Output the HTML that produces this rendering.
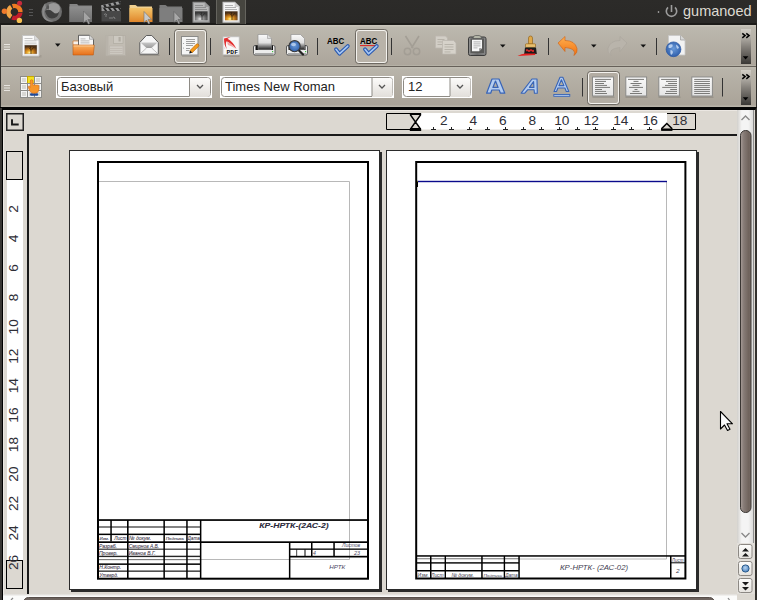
<!DOCTYPE html>
<html><head><meta charset="utf-8">
<style>
*{margin:0;padding:0;box-sizing:border-box}
html,body{width:757px;height:600px;overflow:hidden;background:#dcd8d1;font-family:"Liberation Sans",sans-serif}
.a{position:absolute}
#panel{left:0;top:0;width:757px;height:25px;background:linear-gradient(#2c2b29,#2a2927 23px,#1c1b19 23px)}
#tb1{left:0;top:25px;width:757px;height:42px;background:linear-gradient(#c8c4ba,#c8c4ba 1px,#bcb8ae 2px,#aca59b 40px,#b5b1a6 40px,#b5b1a6 41px,#666059 41px,#666059 42px);border-left:1px solid #2d2c29;border-right:1px solid #2d2c29}
#tb2{left:0;top:67px;width:757px;height:40px;background:linear-gradient(#bfbbb1,#b8b4aa 3px,#aaa398 38px,#b8b3a8 39px);border-left:1px solid #2d2c29;border-right:1px solid #2d2c29}
#work{left:0;top:107px;width:757px;height:493px;background:#dcd8d1;border-left:3px solid #000;border-right:2px solid #33312e;border-top:3px solid #050505;box-shadow:inset 1px 1px 0 #ebe7e2}
.sep{position:absolute;width:1px;height:17px;background:#2c2c2c}
.tog{position:absolute;border:1px solid #f2f0ec;border-radius:3px;background:#bcb7ad;box-shadow:inset 0 0 0 1px #a8a399}
.combo{position:absolute;background:#fff;border:1px solid #f4f2ee}
.combo .in{position:absolute;left:1px;top:1px;right:1px;bottom:1px;border:1px solid #8d8a84;border-radius:3px;background:#fff}
.combo .btn{position:absolute;top:0;right:0;bottom:0;border-left:1px solid #8d8a84;background:linear-gradient(#fbfaf9,#e4e1dc);border-radius:0 3px 3px 0}
.combo .t{position:absolute;left:4px;top:3px;font-size:13px;color:#2b2b2b}
.page{position:absolute;background:#fff;border-left:1px solid #3a3a3a;border-top:1px solid #3a3a3a;box-shadow:3px 3px 0 #2c2c2c}
.ln{position:absolute;background:#000}
.gl{position:absolute;background:#b4b4b4}
.tt{position:absolute;font-size:6px;font-style:italic;color:#3d3a6e;white-space:nowrap;line-height:1}
.rl{position:absolute;font-size:12px;color:#404040;line-height:1}
</style></head><body>
<div id="panel" class="a"></div>
<div id="tb1" class="a"></div>
<div id="tb2" class="a"></div>
<div id="work" class="a"></div>
<div class="a" style="left:0;top:108px;width:2px;height:492px;background:#393734"></div>
<!-- ===== pages ===== -->
<svg class="a" style="left:0;top:107px" width="757" height="493" viewBox="0 107 757 493" shape-rendering="auto">
  <!-- page 1 -->
  <rect x="71" y="152" width="311" height="440" fill="#2a2a2a"/>
  <rect x="69.5" y="150.5" width="310" height="439" fill="#fff" stroke="#2a2a2a" stroke-width="1"/>
  <!-- page 2 -->
  <rect x="388" y="152" width="311" height="440" fill="#2a2a2a"/>
  <rect x="386.5" y="150.5" width="310" height="439" fill="#fff" stroke="#2a2a2a" stroke-width="1"/>

  <!-- page 1 content gray box -->
  <path d="M99 181.5 H349.5 V559.5 H99" fill="none" stroke="#b8b8b8" stroke-width="1"/>
  <!-- page 1 frame -->
  <rect x="98" y="162" width="270" height="416.7" fill="none" stroke="#000" stroke-width="2"/>
  <!-- title block p1 -->
  <g fill="#000">
    <rect x="97" y="519.2" width="271.5" height="1.7"/>
    <rect x="97" y="541.3" width="271.5" height="1.7"/>
    <rect x="97" y="533.6" width="104" height="1.5"/>
    <rect x="97" y="526.4" width="104" height="1.2" opacity=".8"/>
    <rect x="97" y="548.6" width="104" height="1.2" opacity=".8"/>
    <rect x="97" y="555.7" width="104" height="1.4" opacity=".85"/>
    <rect x="97" y="559.3" width="104" height=".9" opacity=".45"/>
    <rect x="97" y="563.4" width="104" height="1.5"/>
    <rect x="97" y="570.5" width="104" height="1.3" opacity=".85"/>
    <!-- verticals -->
    <rect x="110.3" y="520" width="1.5" height="21.5"/>
    <rect x="127" y="520" width="1.6" height="59"/>
    <rect x="163.4" y="520" width="1.5" height="59"/>
    <rect x="186.2" y="520" width="1.5" height="59"/>
    <rect x="199.9" y="520" width="1.5" height="59"/>
    <!-- right part -->
    <rect x="288.9" y="542" width="1.5" height="37"/>
    <rect x="289" y="548.5" width="79" height="1.3"/>
    <rect x="289" y="555.8" width="79" height="1.7"/>
    <rect x="311" y="542" width="1.5" height="15"/>
    <rect x="333.3" y="542" width="1.5" height="15"/>
    <rect x="296" y="549.5" width="1.2" height="6.5" opacity=".6"/>
    <rect x="304.5" y="549.5" width="1" height="6.5"/>
  </g>
  <!-- page 2 content -->
  <path d="M666.5 182 V559 H417" fill="none" stroke="#b8b8b8" stroke-width="1"/>
  <rect x="417" y="180.8" width="250" height="1.4" fill="#0a0a8c"/>
  <rect x="417" y="181" width="1" height="6" fill="#000"/>
  <rect x="416.5" y="181" width="1" height="1" fill="#e8e000"/>
  <!-- page 2 frame -->
  <rect x="416.2" y="162" width="269.2" height="416.5" fill="none" stroke="#000" stroke-width="2"/>
  <g fill="#000">
    <rect x="416" y="555.2" width="270" height="1.5"/>
    <rect x="416" y="558" width="103" height=".9" opacity=".35"/>
    <rect x="416" y="562.2" width="103" height="1.4"/>
    <rect x="416" y="570" width="103" height="1.5"/>
    <rect x="670.3" y="562.3" width="15" height="1"/>
    <rect x="430" y="556" width="1.5" height="23"/>
    <rect x="444.6" y="556" width="1.4" height="23"/>
    <rect x="481.2" y="556" width="1.5" height="23"/>
    <rect x="503.7" y="556" width="1.4" height="23"/>
    <rect x="518.3" y="556" width="1.5" height="23"/>
    <rect x="670" y="556" width="1.5" height="23"/>
  </g>
</svg>
<!-- title block texts -->
<svg class="a" style="left:0;top:107px" width="757" height="493" viewBox="0 107 757 493">
<g font-family="Liberation Sans" font-style="italic" fill="#3c3448" stroke="#3c3448" stroke-width="0.08">
<text x="99.6" y="540" font-size="4" textLength="9.4" lengthAdjust="spacingAndGlyphs">Изм.</text>
<text x="114.2" y="540.2" font-size="6" textLength="12.3" lengthAdjust="spacingAndGlyphs">Лист</text>
<text x="129.1" y="540.2" font-size="6" textLength="22.1" lengthAdjust="spacingAndGlyphs">№ докум.</text>
<text x="165.8" y="540.2" font-size="4" textLength="18.1" lengthAdjust="spacingAndGlyphs">Подпись</text>
<text x="187.6" y="540.2" font-size="6" textLength="12.3" lengthAdjust="spacingAndGlyphs">Дата</text>
<text x="98.9" y="548.2" font-size="6" textLength="18.1" lengthAdjust="spacingAndGlyphs">Разраб.</text>
<text x="128.7" y="548.2" font-size="6" textLength="30.5" lengthAdjust="spacingAndGlyphs">Смирнов А.В.</text>
<text x="98.9" y="555.4" font-size="6" textLength="18.9" lengthAdjust="spacingAndGlyphs">Провер.</text>
<text x="128.7" y="555.4" font-size="6" textLength="26.9" lengthAdjust="spacingAndGlyphs">Иванов В.Г.</text>
<text x="99.3" y="569.2" font-size="5.5" textLength="21.8" lengthAdjust="spacingAndGlyphs">Н.Контр.</text>
<text x="99.5" y="576.8" font-size="5.5" textLength="18.7" lengthAdjust="spacingAndGlyphs">Утверд.</text>
<text x="259.2" y="528.2" font-size="7.3" textLength="69.4" lengthAdjust="spacingAndGlyphs" font-weight="bold" fill="#2a2a3a">КР-НРТК-(2АС-2)</text>
<text stroke="none" fill="#4a4864" x="342" y="546.9" font-size="4.8" textLength="18.1" lengthAdjust="spacingAndGlyphs">Листов</text>
<text stroke="none" fill="#4a4864" x="312.9" y="554.5" font-size="4.6" textLength="2.9" lengthAdjust="spacingAndGlyphs">4</text>
<text stroke="none" fill="#4a4864" x="354" y="554.5" font-size="4.6" textLength="6.1" lengthAdjust="spacingAndGlyphs">23</text>
<text stroke="none" fill="#4a4864" x="329.3" y="568.7" font-size="5.2" textLength="15.9" lengthAdjust="spacingAndGlyphs">НРТК</text>
<text stroke="none" fill="#3e3c50" x="417.3" y="576.7" font-size="6" textLength="11.6" lengthAdjust="spacingAndGlyphs">Изм.</text>
<text stroke="none" fill="#3e3c50" x="431" y="576.7" font-size="6" textLength="12.7" lengthAdjust="spacingAndGlyphs">Лист</text>
<text stroke="none" fill="#3e3c50" x="451.4" y="576.7" font-size="6" textLength="22.6" lengthAdjust="spacingAndGlyphs">№ докум.</text>
<text stroke="none" fill="#3e3c50" x="483.4" y="576.7" font-size="4" textLength="18.9" lengthAdjust="spacingAndGlyphs">Подпись</text>
<text stroke="none" fill="#3e3c50" x="505.2" y="576.7" font-size="6" textLength="12.4" lengthAdjust="spacingAndGlyphs">Дата</text>
<text stroke="none" fill="#3e3c50" x="560" y="569.6" font-size="6.8" textLength="68.1" lengthAdjust="spacingAndGlyphs">КР-НРТК- (2АС-02)</text>
<text stroke="none" fill="#3e3c50" x="671.8" y="561.9" font-size="4.8" textLength="11.6" lengthAdjust="spacingAndGlyphs">Лист</text>
<text stroke="none" fill="#3e3c50" x="676" y="573" font-size="5.5" textLength="3.5" lengthAdjust="spacingAndGlyphs">2</text>
</g></svg>
<!-- ===== top panel ===== -->
<svg class="a" style="left:0;top:0" width="757" height="25" viewBox="0 0 757 25">
  <defs>
    <linearGradient id="ffg" x1="0" y1="0" x2="0" y2="1"><stop offset="0" stop-color="#7a7a7a"/><stop offset="1" stop-color="#3e3e3e"/></linearGradient>
    <linearGradient id="fog" x1="0" y1="0" x2="0" y2="1"><stop offset="0" stop-color="#f3c46a"/><stop offset="1" stop-color="#e0862a"/></linearGradient>
    <linearGradient id="fgg" x1="0" y1="0" x2="0" y2="1"><stop offset="0" stop-color="#8e8e8e"/><stop offset="1" stop-color="#707070"/></linearGradient>
    <radialGradient id="sun" cx=".4" cy=".85" r=".7"><stop offset="0" stop-color="#fff0a0"/><stop offset=".25" stop-color="#f0b030"/><stop offset=".6" stop-color="#b06a18"/><stop offset="1" stop-color="#4a3018"/></radialGradient>
    <radialGradient id="sung" cx=".4" cy=".85" r=".7"><stop offset="0" stop-color="#e8e8e8"/><stop offset=".3" stop-color="#a0a0a0"/><stop offset=".7" stop-color="#606060"/><stop offset="1" stop-color="#3a3a3a"/></radialGradient>
  </defs>
  <!-- ubuntu logo -->
  <path d="M12.55 6.19 A6.0 6.0 0 0 1 20.40 12.11" fill="none" stroke="#ef7b22" stroke-width="4.4"/>
  <path d="M20.34 12.74 A6.0 6.0 0 0 1 12.15 17.46" fill="none" stroke="#c21d2c" stroke-width="4.4"/>
  <path d="M11.22 6.81 A6.0 6.0 0 0 0 11.22 16.99" fill="none" stroke="#f2a446" stroke-width="4.4"/>
  <circle cx="4.4" cy="11.3" r="2.7" fill="#ef7a2c"/>
  <circle cx="19.6" cy="3.3" r="2.5" fill="#c62a3c"/>
  <circle cx="19.4" cy="20.4" r="2.7" fill="#f6c052"/>
  <!-- handle -->
  <rect x="29" y="9" width="4" height="1" fill="#555"/><rect x="29" y="12" width="4" height="1" fill="#555"/><rect x="29" y="15" width="4" height="1" fill="#555"/>
  <!-- firefox gray -->
  <circle cx="51.7" cy="11.8" r="10.3" fill="#6c6c6c"/>
  <ellipse cx="53.5" cy="8.5" rx="6.5" ry="5.5" fill="#9a9a9a"/>
  <path d="M45 11 q4 -3 8 1 q3 3 6 0 q-1 6 -7 6.5 q-5 0 -7 -7.5z" fill="#3e3e3e"/>
  <path d="M48 4.5 q2 2 .5 5 q-1.5 -1 -3 -1z" fill="#555"/>
  <path d="M42.3 10 q.5 -4 3 -7 q0 3 1 4.5 q-3 3 -1.5 8 q2 5 9 5.5 q-7 1.5 -10 -3 q-2 -4 -1.5 -8z" fill="#8a8a8a"/>
  <!-- gray folder -->
  <path d="M69.5 4 h7.5 l1.5 1.5 h13.5 v16.5 h-22.5z" fill="#848484"/>
  <rect x="69.5" y="6.5" width="22.5" height="15.5" fill="url(#fgg)"/>
  <path d="M83.5 11 v12 l2.8 -2.8 2 4 1.6 -.8 -2 -3.8 h3.8z" fill="#a4a4a4" stroke="#5a5a5a" stroke-width=".5"/>
  <!-- clapper -->
  <rect x="101.5" y="11" width="19.5" height="10.5" fill="#474747"/>
  <rect x="101.5" y="8" width="19.5" height="3" fill="#9a9a9a"/>
  <path d="M103 8h2.2l2 3h-2.2zM108 8h2.2l2 3h-2.2zM113 8h2.2l2 3h-2.2zM118 8h2.2l.8 1.2v1.8h-1z" fill="#262626"/>
  <path d="M101 5.2 L120.5 1 L121 4 L101.5 8z" fill="#9a9a9a"/>
  <path d="M103 4.8l2.2-.5 1.5 2.6-2.2 .5zM108 3.7l2.2-.5 1.5 2.6-2.2 .5zM113 2.6l2.2-.5 1.5 2.6-2.2 .5zM118 1.5l2.2-.5 .8 1.6 -.3 1.3-1 .2z" fill="#262626"/>
  <path d="M104 14.5 q2 -1.5 3 .5 M105 16 h2 M109 18 h4 M113 17 q2 0 2 2" stroke="#9a9a9a" stroke-width=".7" fill="none"/>
  <!-- orange folder -->
  <path d="M129.5 5 h6 l2 1.5 h14.5 v15.5 h-22.5z" fill="#f0d090"/>
  <rect x="129.5" y="8" width="23" height="14" fill="url(#fog)"/>
  <path d="M144 11.5 v11 l2.5-2.5 2 4 1.5-.8 -2-3.8 h3.5z" fill="#c8c8c8" stroke="#666" stroke-width=".5"/>
  <!-- gray folder 2 -->
  <path d="M159.5 5 h6 l2 1.5 h14.5 v15.5 h-22.5z" fill="#7a7a7a"/>
  <rect x="159.5" y="8" width="23" height="14" fill="#7e7e7e"/>
  <path d="M174 11.5 v11 l2.5-2.5 2 4 1.5-.8 -2-3.8 h3.5z" fill="#a8a8a8" stroke="#555" stroke-width=".5"/>
  <!-- gray doc -->
  <path d="M192.5 1.8 h12.5 l4.8 4.8 v16.2 h-17.3z" fill="#8e8e8e"/>
  <path d="M193.7 3 h11 l3.9 3.9 v14.7 h-14.9z" fill="#b8b8b8"/>
  <path d="M204.7 3 v3.9 h3.9" fill="#999"/>
  <rect x="195" y="5" width="8" height=".9" fill="#8a8a8a"/><rect x="195" y="7" width="11" height=".9" fill="#8a8a8a"/><rect x="195" y="9" width="12" height=".9" fill="#8a8a8a"/>
  <rect x="195" y="11.3" width="12.6" height="9" fill="url(#sung)"/>
  <path d="M202 20 v-4 l-2 -2.5 M202 16.5 l2.5 -3 M202 15 l-1 -3" stroke="#222" stroke-width=".7" fill="none"/>
  <!-- active highlight -->
  <rect x="216" y="0" width="30" height="24" fill="#46453f"/>
  <rect x="216" y="0" width="1" height="24" fill="#65645e"/><rect x="245" y="0" width="1" height="24" fill="#65645e"/>
  <path d="M222.5 1.8 h12.5 l4.8 4.8 v16.2 h-17.3z" fill="#c8c8c8"/>
  <path d="M223.7 3 h11 l3.9 3.9 v14.7 h-14.9z" fill="#f4f4f4"/>
  <path d="M234.7 3 v3.9 h3.9" fill="#ccc"/>
  <rect x="225" y="5" width="8" height=".9" fill="#aaa"/><rect x="225" y="7" width="11" height=".9" fill="#aaa"/><rect x="225" y="9" width="12" height=".9" fill="#aaa"/>
  <rect x="225" y="11.3" width="12.6" height="9" fill="url(#sun)"/>
  <path d="M232 20 v-4 l-2 -2.5 M232 16.5 l2.5 -3 M232 15 l-1 -3" stroke="#2a1a0a" stroke-width=".7" fill="none"/>
  <!-- power + user -->
  <circle cx="658.5" cy="12" r=".8" fill="#ccc"/>
  <path d="M668 7.3 A5.2 5.2 0 1 0 675 7.3" fill="none" stroke="#9d9d9d" stroke-width="1.6"/>
  <rect x="670.7" y="5" width="1.6" height="7" fill="#9d9d9d"/>
</svg>
<div class="a" style="left:683px;top:2.5px;font-size:14.5px;color:#dedad2;line-height:17px">gumanoed</div>
<!-- ===== rulers ===== -->
<svg class="a" style="left:0;top:107px" width="757" height="493" viewBox="0 107 757 493">
  <!-- L tab -->
  <rect x="6.75" y="113.75" width="16.5" height="16.5" fill="#dcd8d1" stroke="#222" stroke-width="1.5"/>
  <path d="M12 119.2 v5.3 h6.7" fill="none" stroke="#1a1a1a" stroke-width="1.9"/>
  <!-- horizontal ruler -->
  <rect x="386.5" y="113.5" width="309" height="16" fill="#dcd8d1"/>
  <rect x="415" y="113" width="252" height="16.5" fill="#fff"/>
  <path d="M415 113.5 H386.5 V129.5 H415" fill="none" stroke="#000" stroke-width="1"/>
  <path d="M667 113.5 H695.5 V129.5 H667" fill="none" stroke="#000" stroke-width="1"/>
  <!-- hourglass -->
  <path d="M410.5 114 h10 v1 l-5 7 l5 7 v1.2 h-10 v-1.2 l5 -7 l-5 -7z" fill="#dcd8d1" stroke="#000" stroke-width="1.4"/>
  <rect x="410" y="113" width="11" height="2" fill="#000"/>
  <rect x="410" y="128" width="11" height="2.5" fill="#000"/>
  <!-- right indent -->
  <path d="M661.8 130 v-1.6 l5 -5 l5 5 v1.6z" fill="#dcd8d1" stroke="#000" stroke-width="1.4"/>
  <rect x="661.5" y="128.5" width="10.5" height="2" fill="#000"/>
  <!-- tab stops -->
  <g stroke="#222" stroke-width="1" fill="none">
    <path d="M433.5 127 v2.5 M431 129.5 h5"/>
    <path d="M451.5 127 v2.5 M449 129.5 h5"/>
    <path d="M469.5 127 v2.5 M467 129.5 h5"/>
    <path d="M487.5 127 v2.5 M485 129.5 h5"/>
    <path d="M505.5 127 v2.5 M503 129.5 h5"/>
    <path d="M523.5 127 v2.5 M521 129.5 h5"/>
    <path d="M541.5 127 v2.5 M539 129.5 h5"/>
    <path d="M559.5 127 v2.5 M557 129.5 h5"/>
    <path d="M577.5 127 v2.5 M575 129.5 h5"/>
    <path d="M595.5 127 v2.5 M593 129.5 h5"/>
    <path d="M613.5 127 v2.5 M611 129.5 h5"/>
    <path d="M631.5 127 v2.5 M629 129.5 h5"/>
    <path d="M649.5 127 v2.5 M647 129.5 h5"/>
  </g>
  <!-- document frame -->
  <rect x="27" y="134" width="710" height="2" fill="#1a1a1a"/>
  <rect x="27" y="134" width="2" height="460" fill="#1a1a1a"/>
  <!-- vertical ruler -->
  <rect x="6.5" y="151.5" width="16" height="28" fill="#dcd8d1" stroke="#000" stroke-width="1"/>
  <rect x="7" y="180" width="16" height="380" fill="#fff"/>
  <rect x="6.5" y="560.5" width="16" height="28" fill="#dcd8d1" stroke="#000" stroke-width="1"/>
</svg>

<svg class="a" style="left:0;top:107px" width="757" height="493" viewBox="0 107 757 493">
<g font-family="Liberation Sans" font-size="12" fill="#2e2e36" text-anchor="middle">
<text transform="translate(443.8 125.2) scale(1.14 1)">2</text>
<text transform="translate(473.3 125.2) scale(1.14 1)">4</text>
<text transform="translate(502.8 125.2) scale(1.14 1)">6</text>
<text transform="translate(532.3 125.2) scale(1.14 1)">8</text>
<text transform="translate(561.8 125.2) scale(1.14 1)">10</text>
<text transform="translate(591.3 125.2) scale(1.14 1)">12</text>
<text transform="translate(620.8 125.2) scale(1.14 1)">14</text>
<text transform="translate(650.3 125.2) scale(1.14 1)">16</text>
<text transform="translate(679.8 125.2) scale(1.14 1)">18</text>
<text transform="translate(18.2 209.0) rotate(-90) scale(1.14 1)">2</text>
<text transform="translate(18.2 238.4) rotate(-90) scale(1.14 1)">4</text>
<text transform="translate(18.2 267.9) rotate(-90) scale(1.14 1)">6</text>
<text transform="translate(18.2 297.4) rotate(-90) scale(1.14 1)">8</text>
<text transform="translate(18.2 326.8) rotate(-90) scale(1.14 1)">10</text>
<text transform="translate(18.2 356.2) rotate(-90) scale(1.14 1)">12</text>
<text transform="translate(18.2 385.7) rotate(-90) scale(1.14 1)">14</text>
<text transform="translate(18.2 415.1) rotate(-90) scale(1.14 1)">16</text>
<text transform="translate(18.2 444.6) rotate(-90) scale(1.14 1)">18</text>
<text transform="translate(18.2 474.1) rotate(-90) scale(1.14 1)">20</text>
<text transform="translate(18.2 503.5) rotate(-90) scale(1.14 1)">22</text>
<text transform="translate(18.2 533.0) rotate(-90) scale(1.14 1)">24</text>
<text transform="translate(18.2 562.4) rotate(-90) scale(1.14 1)">26</text>
</g></svg>
<!-- ===== scrollbars ===== -->
<svg class="a" style="left:0;top:107px" width="757" height="493" viewBox="0 107 757 493">
  <defs>
    <linearGradient id="trk" x1="0" y1="0" x2="1" y2="0"><stop offset="0" stop-color="#d2d0cc"/><stop offset=".3" stop-color="#f4f4f4"/><stop offset=".7" stop-color="#f4f4f4"/><stop offset="1" stop-color="#dcdcda"/></linearGradient>
    <linearGradient id="trkh" x1="0" y1="0" x2="0" y2="1"><stop offset="0" stop-color="#dedbd6"/><stop offset=".4" stop-color="#fbfbfa"/><stop offset="1" stop-color="#fbfbfa"/></linearGradient>
    <linearGradient id="thm" x1="0" y1="0" x2="1" y2="0"><stop offset="0" stop-color="#a89d98"/><stop offset=".3" stop-color="#877c77"/><stop offset=".8" stop-color="#6e625b"/><stop offset="1" stop-color="#7a6e68"/></linearGradient>
    <linearGradient id="thmh" x1="0" y1="0" x2="0" y2="1"><stop offset="0" stop-color="#6a605b"/><stop offset="1" stop-color="#847a75"/></linearGradient>
    <linearGradient id="sbtn" x1="0" y1="0" x2="0" y2="1"><stop offset="0" stop-color="#fdfdfc"/><stop offset="1" stop-color="#e6e3de"/></linearGradient>
    <radialGradient id="nav" cx=".45" cy=".4" r=".6"><stop offset="0" stop-color="#b8d4f0"/><stop offset="1" stop-color="#4a82c0"/></radialGradient>
  </defs>
  <!-- vertical track -->
  <rect x="737" y="110" width="16" height="433" fill="url(#trk)"/>
  <rect x="753" y="110" width="1" height="433" fill="#8e8e8e"/>
  <rect x="754" y="110" width="1" height="490" fill="#dcd8d1"/>
  <path d="M741.5 120 l4 -4 l4 4" fill="none" stroke="#8a8a8a" stroke-width="1.4"/>
  <rect x="740.5" y="130.5" width="10.5" height="382" rx="5" fill="url(#thm)" stroke="#3a3633" stroke-width="1"/>
  <path d="M741.5 533 l4 4 l4 -4" fill="none" stroke="#8a8a8a" stroke-width="1.4"/>
  <!-- nav buttons -->
  <rect x="737" y="543" width="17.5" height="51" fill="#e2dfda"/>
  <rect x="738.5" y="544.5" width="13.5" height="14" rx="2" fill="url(#sbtn)" stroke="#8c8883" stroke-width="1"/>
  <path d="M742 551.5 h7 l-3.5 -3.5z M742 556.5 h7 l-3.5 -3.5z" fill="#1a1a1a"/>
  <rect x="738.5" y="561.5" width="13.5" height="14" rx="2" fill="url(#sbtn)" stroke="#8c8883" stroke-width="1"/>
  <circle cx="745.5" cy="568.5" r="3.6" fill="url(#nav)" stroke="#2a5a8a" stroke-width="1"/>
  <rect x="738.5" y="578.5" width="13.5" height="14" rx="2" fill="url(#sbtn)" stroke="#8c8883" stroke-width="1"/>
  <path d="M742 582 h7 l-3.5 3.5z M742 587 h7 l-3.5 3.5z" fill="#1a1a1a"/>
  <!-- horizontal track -->
  <rect x="3" y="594" width="734" height="6" fill="url(#trkh)"/>
  <rect x="737" y="594" width="17" height="6" fill="#dcd8d1"/>
  <path d="M11 600 l2 -2" stroke="#888" stroke-width="1.2"/>
  <path d="M728 598 l1.5 2" stroke="#888" stroke-width="1.2"/>
  <rect x="23.5" y="597.5" width="691" height="10" rx="5" fill="url(#thmh)" stroke="#574e4a" stroke-width="1"/>
  <!-- mouse cursor -->
  <path d="M720.5 411.5 V429 l4 -4 l3 5.5 l2.5 -1.2 l-3 -5.5 h5.5z" fill="#fafafa" stroke="#000" stroke-width="1.1" stroke-linejoin="round"/>
</svg>
<!-- ===== toolbar 1 ===== -->
<svg class="a" style="left:0;top:25px" width="757" height="41" viewBox="0 25 757 41">
  <defs>
    <linearGradient id="orf" x1="0" y1="0" x2="0" y2="1"><stop offset="0" stop-color="#f8b060"/><stop offset="1" stop-color="#e8701a"/></linearGradient>
    <linearGradient id="envg" x1="0" y1="0" x2="0" y2="1"><stop offset="0" stop-color="#c8c8c8"/><stop offset="1" stop-color="#9a9a9a"/></linearGradient>
    <linearGradient id="pst" x1="0" y1="0" x2="1" y2="0"><stop offset="0" stop-color="#909090"/><stop offset=".5" stop-color="#6a6a6a"/><stop offset="1" stop-color="#8a8a8a"/></linearGradient>
    <linearGradient id="env" x1="0" y1="0" x2="0" y2="1"><stop offset="0" stop-color="#f8f8f8"/><stop offset="1" stop-color="#d8d8d8"/></linearGradient>
    <radialGradient id="sun2" cx=".4" cy=".85" r=".7"><stop offset="0" stop-color="#fff0a0"/><stop offset=".25" stop-color="#f0b030"/><stop offset=".6" stop-color="#b06a18"/><stop offset="1" stop-color="#4a3018"/></radialGradient>
    <radialGradient id="globe" cx=".5" cy=".45" r=".6"><stop offset="0" stop-color="#6a9ad8"/><stop offset="1" stop-color="#2a5aa8"/></radialGradient>
    <linearGradient id="ovf" x1="0" y1="0" x2="0" y2="1"><stop offset="0" stop-color="#d2cec6"/><stop offset=".12" stop-color="#c4c0b8"/><stop offset=".5" stop-color="#85817b"/><stop offset="1" stop-color="#3a3835"/></linearGradient>
    <linearGradient id="ud" x1="0" y1="0" x2="0" y2="1"><stop offset="0" stop-color="#ffb050"/><stop offset="1" stop-color="#f07010"/></linearGradient>
  </defs>
  <!-- handle -->
  <rect x="4" y="44" width="6" height="1" fill="#e6e3de"/><rect x="4" y="46.5" width="6" height="1" fill="#e6e3de"/><rect x="4" y="49" width="6" height="1" fill="#e6e3de"/>
  <!-- new doc -->
  <rect x="21.5" y="55" width="20" height="2.5" fill="#8a857c" opacity=".35"/>
  <path d="M22.5 35.5 h12 l4.5 4.5 v16 h-16.5z" fill="#fafafa" stroke="#c4c4c4" stroke-width="1"/>
  <path d="M34.5 35.5 v4.5 h4.5" fill="#ddd" stroke="#bbb" stroke-width=".6"/>
  <rect x="24.5" y="38" width="8" height="1" fill="#c4c4c4"/><rect x="24.5" y="40.3" width="12" height="1" fill="#c4c4c4"/><rect x="24.5" y="42.6" width="12" height="1" fill="#c4c4c4"/>
  <rect x="24.5" y="45" width="12.5" height="9" fill="url(#sun2)" stroke="#bbb" stroke-width=".5"/>
  <path d="M31 54 v-4 l-2 -2.5 M31 50.5 l2.5 -3 M31 49 l-1 -3" stroke="#2a1a0a" stroke-width=".7" fill="none"/>
  <!-- dropdown -->
  <path d="M55 43.5 h5.5 l-2.75 3.2z" fill="#111"/>
  <!-- open -->
  <path d="M73 41 h5 l1 -1 h4 v5 h-10z" fill="#f6f2ec" stroke="#d07a30" stroke-width=".7"/>
  <path d="M78.5 35.3 h11 l4 4 v9.5 h-15z" fill="#f8f8f8" stroke="#444" stroke-width=".8"/>
  <path d="M89.5 35.3 v4 h4" fill="#ddd" stroke="#777" stroke-width=".5"/>
  <rect x="80.5" y="38.5" width="5" height=".8" fill="#aaa"/><rect x="80.5" y="40.5" width="9" height=".8" fill="#aaa"/><rect x="80.5" y="42.5" width="9" height=".8" fill="#aaa"/>
  <path d="M73 45 h21.3 l-1 10 h-20.3z" fill="url(#orf)" stroke="#c05a10" stroke-width=".6"/>
  <rect x="73.5" y="45.5" width="20" height="1" fill="#fcd0a0" opacity=".8"/>
  <!-- save disabled -->
  <rect x="106" y="35.5" width="19.5" height="20" fill="#c2bdb4" stroke="#b4afa6" stroke-width=".8"/>
  <rect x="106" y="35.5" width="2.5" height="20" fill="#b8b3aa"/>
  <rect x="113.5" y="35.5" width="9.5" height="8" fill="#ccc8c0" stroke="#b0aba2" stroke-width=".7"/>
  <rect x="118.5" y="37" width="2.2" height="4.5" fill="#b0aba2"/>
  <rect x="109.5" y="46" width="13.5" height="8.5" fill="#ccc8c0" stroke="#b8b3aa" stroke-width=".6"/>
  <g fill="#bcb7ae"><rect x="110" y="48" width="12.5" height=".7"/><rect x="110" y="50" width="12.5" height=".7"/><rect x="110" y="52" width="12.5" height=".7"/></g>
  <!-- mail -->
  <rect x="139.5" y="54.5" width="20" height="1.5" fill="#000" opacity=".12"/>
  <path d="M139.8 42.5 l6.5 -7 h5.5 l6.5 7 v11.7 h-18.5z" fill="#f6f6f6" stroke="#5c5c5c" stroke-width="1"/>
  <path d="M140.5 42.5 h17 l-6 5.5 h-5z" fill="url(#envg)"/>
  <path d="M140 54 l6.5 -6 M158.2 54 l-6.5 -6" stroke="#b0b0b0" stroke-width=".8"/>
  <!-- separators -->
  <rect x="169" y="38" width="1" height="17" fill="#333"/>
  <!-- toggle edit -->
  <rect x="174.5" y="29.5" width="32" height="34" rx="3" fill="#b9b3a9" stroke="#6e6a63" stroke-width="1"/>
  <rect x="175.5" y="30.5" width="30" height="32" rx="2.5" fill="none" stroke="#f4f2ee" stroke-width="1"/>
  <rect x="182" y="55.5" width="17" height="1.5" fill="#000" opacity=".12"/>
  <rect x="181.5" y="36.5" width="16.5" height="18.5" fill="#f6f6f6" stroke="#8a8a88" stroke-width="1"/>
  <g fill="#a0a0a0"><rect x="186" y="39" width="9" height="1"/><rect x="186" y="41" width="9" height="1"/><rect x="186" y="43" width="9" height="1"/><rect x="186" y="45" width="7" height="1"/><rect x="186" y="48" width="4" height="1"/><rect x="186" y="50" width="3" height="1"/></g>
  <circle cx="183.5" cy="43.5" r=".5" fill="#888"/><circle cx="183.5" cy="48" r=".5" fill="#888"/>
  <path d="M190 50.5 l6.2 -6.2 a1.4 1.4 0 0 1 2.2 2.2 l-6.2 6.2 z" fill="#f59a1a" stroke="#b05a00" stroke-width=".6"/>
  <path d="M190 50.5 l2.2 2.2 l-3 .9z" fill="#111"/>
  <rect x="210" y="38" width="1" height="17" fill="#333"/>
  <!-- pdf -->
  <rect x="223.5" y="55.2" width="16" height="1.5" fill="#000" opacity=".15"/>
  <rect x="223" y="36.8" width="16.2" height="18" fill="#f8f8f8" stroke="#c0c0c0" stroke-width=".8"/>
  <path d="M224 38.5 q3 -1 6.5 -1.5 l-3 1.8 q5 2.5 9 10 q-6 -6 -10 -7.5 q-1.5 3 .5 8 q-3 -4 -3 -10.8z" fill="#e01818" opacity=".9"/>
  <path d="M227 42 q4 1 9 7 q-4 -3 -8 -4z" fill="#f07070" opacity=".6"/>
  <circle cx="224.8" cy="44" r=".4" fill="#999"/><circle cx="224.8" cy="48" r=".4" fill="#999"/>
  <text x="226.6" y="54.2" font-size="6.2" font-weight="bold" fill="#111" font-family="Liberation Mono" textLength="11.3" lengthAdjust="spacingAndGlyphs">PDF</text>
  <!-- printer -->
  <linearGradient id="ppr" x1="0" y1="0" x2="0" y2="1"><stop offset="0" stop-color="#fafafa"/><stop offset=".55" stop-color="#e0e0e0"/><stop offset="1" stop-color="#222"/></linearGradient>
  <rect x="253.5" y="45.5" width="21.5" height="9.5" rx="1.5" fill="#ececec" stroke="#5a5a5a" stroke-width="1"/>
  <rect x="255.5" y="45.5" width="17.5" height="4.5" fill="#111"/>
  <path d="M258 34.5 h9.5 l4 4 v11 h-13.5z" fill="url(#ppr)" stroke="#888" stroke-width=".6"/>
  <path d="M267.5 34.5 v4 h4" fill="#ddd" stroke="#999" stroke-width=".6"/>
  <rect x="255" y="53.2" width="18.5" height="1" fill="#999"/>
  <rect x="272" y="51" width="1.2" height="1.2" fill="#40c040"/>
  <!-- print preview -->
  <rect x="286.5" y="45.5" width="21" height="9.5" rx="1.5" fill="#ececec" stroke="#5a5a5a" stroke-width="1"/>
  <rect x="288.5" y="45.5" width="17" height="4.5" fill="#111"/>
  <path d="M291 34.5 h9.5 l4 4 v11 h-13.5z" fill="url(#ppr)" stroke="#888" stroke-width=".6"/>
  <rect x="288" y="53.2" width="18.5" height="1" fill="#999"/>
  <rect x="305" y="51" width="1.2" height="1.2" fill="#40c040"/>
  <path d="M298.5 50 l4.5 4.5" stroke="#222" stroke-width="2.2" stroke-linecap="round"/>
  <circle cx="294.6" cy="46.2" r="5.6" fill="url(#globe)" stroke="#3a3a3a" stroke-width="1.1"/>
  <ellipse cx="293.5" cy="44.5" rx="2.5" ry="1.8" fill="#cfe0f6" opacity=".7"/>
  <rect x="317" y="38" width="1" height="17" fill="#333"/>
  <!-- ABC check -->
  <text x="327" y="44.2" font-size="8.4" font-weight="bold" fill="#000" font-family="Liberation Sans" textLength="17.2" lengthAdjust="spacingAndGlyphs">ABC</text>
  <path d="M336 49.3 l3.6 4.4 l8.2 -7.6" fill="none" stroke="#2858b0" stroke-width="3.8" stroke-linecap="round" stroke-linejoin="round"/>
  <path d="M336 49.3 l3.6 4.4 l8.2 -7.6" fill="none" stroke="#a8c8f4" stroke-width="1.6" stroke-linecap="round" stroke-linejoin="round"/>
  <!-- toggle autospell -->
  <rect x="355.5" y="29.5" width="32" height="34" rx="3" fill="#b9b3a9" stroke="#6e6a63" stroke-width="1"/>
  <rect x="356.5" y="30.5" width="30" height="32" rx="2.5" fill="none" stroke="#f4f2ee" stroke-width="1"/>
  <text x="360" y="44.2" font-size="8.4" font-weight="bold" fill="#000" font-family="Liberation Sans" textLength="17.2" lengthAdjust="spacingAndGlyphs">ABC</text>
  <path d="M360 46 l1 -.8 l1 .8 l1 -.8 l1 .8 l1 -.8 l1 .8 l1 -.8 l1 .8 l1 -.8 l1 .8 l1 -.8 l1 .8 l1 -.8 l1 .8 l1 -.8 l1 .8" fill="none" stroke="#e01010" stroke-width=".9"/>
  <path d="M365 49.3 l3.6 4.4 l8.2 -7.6" fill="none" stroke="#2858b0" stroke-width="3.8" stroke-linecap="round" stroke-linejoin="round"/>
  <path d="M365 49.3 l3.6 4.4 l8.2 -7.6" fill="none" stroke="#a8c8f4" stroke-width="1.6" stroke-linecap="round" stroke-linejoin="round"/>
  <rect x="391" y="38" width="1" height="17" fill="#333"/>
  <!-- scissors disabled -->
  <path d="M405.5 36 l7.5 12 M419 36 l-7.5 12" stroke="#a39e95" stroke-width="1.6"/>
  <circle cx="407.5" cy="51.5" r="3.2" fill="none" stroke="#a39e95" stroke-width="1.5"/>
  <circle cx="416.5" cy="51.5" r="3.2" fill="none" stroke="#a39e95" stroke-width="1.5"/>
  <!-- copy disabled -->
  <path d="M435.5 36 h10 l2 2 v10 h-12z" fill="#d2cec6" stroke="#bdb8b0" stroke-width=".8"/>
  <g fill="#b4afa6"><rect x="437.5" y="39" width="7" height=".9"/><rect x="437.5" y="41.5" width="7" height=".9"/><rect x="437.5" y="44" width="7" height=".9"/></g>
  <path d="M442.5 40.5 h11 l2.5 2.5 v11 h-13.5z" fill="#d6d2ca" stroke="#bdb8b0" stroke-width=".8"/>
  <g fill="#b4afa6"><rect x="444.5" y="44" width="9" height=".9"/><rect x="444.5" y="46.5" width="9" height=".9"/><rect x="444.5" y="49" width="9" height=".9"/><rect x="444.5" y="51.5" width="6" height=".9"/></g>
  <!-- paste -->
  <rect x="468.5" y="37" width="17.5" height="18.5" rx="1.8" fill="url(#pst)" stroke="#3a3a3a" stroke-width="1"/>
  <rect x="470.5" y="38.5" width="13.5" height="14.5" fill="#5a5a58"/>
  <path d="M473 38.5 q0 -3 2.5 -3 h3.5 q2.5 0 2.5 3z" fill="#b4b6a8" stroke="#444" stroke-width=".6"/>
  <path d="M472 39.8 h10 v8.5 l-2.8 3 h-7.2z" fill="#f6f6f6"/>
  <path d="M482 48.3 l-2.8 3 v-3z" fill="#888"/>
  <g fill="#a0a0a0"><rect x="473.5" y="41.5" width="7" height=".8"/><rect x="473.5" y="43.5" width="7" height=".8"/><rect x="473.5" y="45.5" width="7" height=".8"/><rect x="473.5" y="47.5" width="4" height=".8"/></g>
  <path d="M500 44.5 h5.5 l-2.75 3z" fill="#111"/>
  <!-- brush -->
  <path d="M528.5 44 v-6 a2 2 0 0 1 4 0 v6z" fill="#e0a848" stroke="#8a5a10" stroke-width=".6"/>
  <rect x="525.5" y="43.8" width="10" height="3.6" rx=".8" fill="#e8c070" stroke="#8a5a10" stroke-width=".6"/>
  <path d="M525 47.4 h11 l.8 6.5 h-12.6z" fill="#1a1a1a"/>
  <path d="M526 49.5 q1 -1 2 0 q1 1 2 0 q1 -1 2 0 q1 1 2 0 v2 q-1 1.5 -2 0 q-1 -1 -2 0 q-1 1 -2 0 q-1 -1 -2 0z" fill="#d02828"/>
  <path d="M517.5 56 q4 -2.5 8 -2.5 h10 l-.5 1.5 q-8 .5 -17.5 1z" fill="#e82020"/>
  <rect x="548" y="38" width="1" height="17" fill="#333"/>
  <!-- undo -->
  <path d="M558 43 l7 -6.5 v4 q10 0 12 8 q1 4 -3 7 q3 -7 -9 -8 v4z" fill="url(#ud)" stroke="#d06010" stroke-width=".6"/>
  <path d="M591 44.5 h5.5 l-2.75 3z" fill="#111"/>
  <!-- redo disabled -->
  <path d="M627 43 l-7 -6.5 v4 q-10 0 -12 8 q-1 4 3 7 q-3 -7 9 -8 v4z" fill="#b9b4ab" stroke="#aaa59c" stroke-width=".6"/>
  <path d="M640.5 44.5 h5.5 l-2.75 3z" fill="#111"/>
  <rect x="656" y="38" width="1" height="17" fill="#333"/>
  <!-- web doc -->
  <path d="M668.5 35.5 h12 l4.5 4.5 v15 h-16.5z" fill="#f2f2f2" stroke="#c8c8c8" stroke-width=".8"/>
  <path d="M680.5 35.5 v4.5 h4.5" fill="#d8d8d8" stroke="#999" stroke-width=".7"/>
  <circle cx="673.5" cy="49.3" r="7.4" fill="url(#globe)" stroke="#2a56a0" stroke-width=".7"/>
  <path d="M668.5 45.5 q2 -2 4 -1 q1 2 -1 3 q-2 1 -3 0z M670.5 50 q2 0 2.5 2 q-.5 3 -2 3 q-1 -2 -.5 -5z M676 44.5 q2 1 3 3 q-1 2 -2 1 q-1 -2 -1 -4z" fill="#c8dcf6" opacity=".85"/>
  <!-- overflow -->
  <rect x="741" y="29" width="10" height="35" fill="url(#ovf)"/>
  <path d="M742.3 33.3 l2.8 2.3 l-2.8 2.3 M746.3 33.3 l2.8 2.3 l-2.8 2.3" fill="none" stroke="#000" stroke-width="1.5"/>
  <path d="M742.8 56.2 h5.6 l-2.8 3.2z" fill="#000"/>
</svg>
<!-- ===== toolbar 2 ===== -->
<svg class="a" style="left:0;top:66px" width="757" height="42" viewBox="0 66 757 42">
  <defs>
    <linearGradient id="ovf2" x1="0" y1="0" x2="0" y2="1"><stop offset="0" stop-color="#d2cec6"/><stop offset=".12" stop-color="#c4c0b8"/><stop offset=".5" stop-color="#85817b"/><stop offset="1" stop-color="#3a3835"/></linearGradient>
    <linearGradient id="btng" x1="0" y1="0" x2="0" y2="1"><stop offset="0" stop-color="#fcfbfa"/><stop offset="1" stop-color="#e2dfda"/></linearGradient>
    <linearGradient id="ag" x1="0" y1="0" x2="0" y2="1"><stop offset="0" stop-color="#8ab4ee"/><stop offset="1" stop-color="#3a6ac0"/></linearGradient>
    <linearGradient id="alg" x1="0" y1="0" x2="0" y2="1"><stop offset="0" stop-color="#fafafa"/><stop offset="1" stop-color="#e4e4e4"/></linearGradient>
  </defs>
  <!-- handle -->
  <rect x="4" y="85" width="6" height="1" fill="#e6e3de"/><rect x="4" y="87.5" width="6" height="1" fill="#e6e3de"/><rect x="4" y="90" width="6" height="1" fill="#e6e3de"/>
  <!-- styles icon -->
  <rect x="20.5" y="76.5" width="7" height="7" fill="#d8d8d4" stroke="#8c8c88" stroke-width="1"/><rect x="21.5" y="77.5" width="5" height="5" fill="none" stroke="#fafafa" stroke-width=".8"/><rect x="20.5" y="83.5" width="7" height="7" fill="#d8d8d4" stroke="#8c8c88" stroke-width="1"/><rect x="21.5" y="84.5" width="5" height="5" fill="none" stroke="#fafafa" stroke-width=".8"/><rect x="20.5" y="90.5" width="7" height="7" fill="#d8d8d4" stroke="#8c8c88" stroke-width="1"/><rect x="21.5" y="91.5" width="5" height="5" fill="none" stroke="#fafafa" stroke-width=".8"/><rect x="27.5" y="76.5" width="7" height="7" fill="#f2e020" stroke="#c8a800" stroke-width="1"/><rect x="27.5" y="83.5" width="7" height="7" fill="#d8d8d4" stroke="#8c8c88" stroke-width="1"/><rect x="28.5" y="84.5" width="5" height="5" fill="none" stroke="#fafafa" stroke-width=".8"/><rect x="27.5" y="90.5" width="7" height="7" fill="#d8d8d4" stroke="#8c8c88" stroke-width="1"/><rect x="28.5" y="91.5" width="5" height="5" fill="none" stroke="#fafafa" stroke-width=".8"/><rect x="34.5" y="76.5" width="7" height="7" fill="#d8d8d4" stroke="#8c8c88" stroke-width="1"/><rect x="35.5" y="77.5" width="5" height="5" fill="none" stroke="#fafafa" stroke-width=".8"/><rect x="34.5" y="83.5" width="7" height="7" fill="#d8d8d4" stroke="#8c8c88" stroke-width="1"/><rect x="35.5" y="84.5" width="5" height="5" fill="none" stroke="#fafafa" stroke-width=".8"/><rect x="34.5" y="90.5" width="7" height="7" fill="#d8d8d4" stroke="#8c8c88" stroke-width="1"/><rect x="35.5" y="91.5" width="5" height="5" fill="none" stroke="#fafafa" stroke-width=".8"/>
  <rect x="30" y="93.3" width="8.2" height="2.4" rx="1.2" fill="#1e4a9a"/>
  <path d="M30.3 81 a1.3 1.3 0 0 1 2.6 0 v4.2 q1 -.8 2 0 q1 -.8 2 0 q1 -.6 2 .3 v4.5 q-.5 3 -3.5 3.2 h-2.5 q-2.5 -.3 -3.5 -3 l-1.5 -3.5 q.5 -1 1.8 -.2 l.6 .8z" fill="#f7962a" stroke="#d06010" stroke-width=".5"/>
  <!-- combo 1 -->
  <rect x="56" y="76" width="156" height="22" fill="#fff"/>
  <rect x="57.5" y="77.5" width="153" height="19" rx="3" fill="#fff" stroke="#8e8b85" stroke-width="1"/>
  <path d="M189.5 78 h17.5 a3 3 0 0 1 3 3 v13 a3 3 0 0 1 -3 3 h-17.5z" fill="url(#btng)"/>
  <rect x="189" y="78" width="1" height="18" fill="#8e8b85"/>
  <path d="M197 85 l3 3 l3 -3" fill="none" stroke="#555" stroke-width="1.3"/>
  <!-- combo 2 -->
  <rect x="220" y="76" width="174" height="22" fill="#fff"/>
  <rect x="221.5" y="77.5" width="171" height="19" rx="3" fill="#fff" stroke="#8e8b85" stroke-width="1"/>
  <path d="M372 78 h17.5 a3 3 0 0 1 3 3 v13 a3 3 0 0 1 -3 3 h-17.5z" fill="url(#btng)"/>
  <rect x="371.5" y="78" width="1" height="18" fill="#8e8b85"/>
  <path d="M379 85 l3 3 l3 -3" fill="none" stroke="#555" stroke-width="1.3"/>
  <!-- combo 3 -->
  <rect x="402" y="76" width="70" height="22" fill="#fff"/>
  <rect x="403.5" y="77.5" width="67" height="19" rx="3" fill="#fff" stroke="#8e8b85" stroke-width="1"/>
  <path d="M450 78 h17.5 a3 3 0 0 1 3 3 v13 a3 3 0 0 1 -3 3 h-17.5z" fill="url(#btng)"/>
  <rect x="449.5" y="78" width="1" height="18" fill="#8e8b85"/>
  <path d="M457 85 l3 3 l3 -3" fill="none" stroke="#555" stroke-width="1.3"/>
  <!-- bold A -->
  <path d="M486.6 93.2 L492 79 H499 L504.8 93.2 H500.4 L499.2 90 H491.8 L490.7 93.2Z M492.9 87.4 H498.1 L495.5 81Z" fill="#b4cdf0" stroke="#3864b6" stroke-width="1.2" stroke-linejoin="round" fill-rule="evenodd"/>
  <!-- italic A -->
  <path d="M521.2 93.2 L532 79 H537 L537.3 93.2 H534.4 L534.1 89.8 H527.6 L524.8 93.2Z M529.4 87.4 H533.9 L533.6 81.6Z" fill="#b4cdf0" stroke="#3864b6" stroke-width="1.1" stroke-linejoin="round" fill-rule="evenodd"/>
  <!-- underline A -->
  <path d="M554 91.5 L560 77.3 H562.8 L568.8 91.5 H566.3 L564.9 88 H557.9 L556.5 91.5Z M558.9 85.6 H563.9 L561.4 79.8Z" fill="#b4cdf0" stroke="#3864b6" stroke-width="1.1" stroke-linejoin="round" fill-rule="evenodd"/>
  <rect x="553.8" y="94.5" width="16" height="1.8" fill="#b4cdf0" stroke="#3864b6" stroke-width=".9"/>
  <rect x="582" y="78" width="1" height="18.5" fill="#333"/>
  <!-- toggle align left -->
  <rect x="587.5" y="71.5" width="32" height="33" rx="3" fill="#b3ada3" stroke="#6e6a63" stroke-width="1"/>
  <rect x="588.5" y="72.5" width="30" height="31" rx="2.5" fill="none" stroke="#f4f2ee" stroke-width="1"/>
  <rect x="592.5" y="96.5" width="22" height="1.5" fill="#000" opacity=".12"/>
  <rect x="592.5" y="77" width="21" height="19" fill="url(#alg)" stroke="#8a8a88" stroke-width="1"/>
  <g fill="#7a7a78"><rect x="595.0" y="78.9" width="16.0" height="1"/><rect x="595.0" y="80.9" width="11.0" height="1"/><rect x="595.0" y="83.0" width="9.0" height="1"/><rect x="595.0" y="84.9" width="12.0" height="1"/><rect x="595.0" y="86.9" width="15.0" height="1"/><rect x="595.0" y="89.0" width="7.0" height="1"/><rect x="595.0" y="90.9" width="11.0" height="1"/><rect x="595.0" y="93.0" width="12.0" height="1"/></g>
  <!-- center -->
  <rect x="625.5" y="96.5" width="22" height="1.5" fill="#000" opacity=".12"/>
  <rect x="625.8" y="77" width="20.8" height="19" fill="url(#alg)" stroke="#8a8a88" stroke-width="1"/>
  <g fill="#7a7a78"><rect x="628.0" y="78.9" width="16.0" height="1"/><rect x="633.5" y="80.9" width="5.0" height="1"/><rect x="630.5" y="83.0" width="11.0" height="1"/><rect x="632.5" y="84.9" width="7.0" height="1"/><rect x="629.0" y="86.9" width="14.0" height="1"/><rect x="634.5" y="89.0" width="3.0" height="1"/><rect x="632.5" y="90.9" width="7.0" height="1"/><rect x="630.0" y="93.0" width="12.0" height="1"/></g>
  <!-- right -->
  <rect x="658.5" y="96.5" width="22" height="1.5" fill="#000" opacity=".12"/>
  <rect x="658.8" y="77" width="20.6" height="19" fill="url(#alg)" stroke="#8a8a88" stroke-width="1"/>
  <g fill="#7a7a78"><rect x="661.1" y="78.9" width="15.9" height="1"/><rect x="666.0" y="80.9" width="11.0" height="1"/><rect x="668.1" y="83.0" width="8.9" height="1"/><rect x="665.0" y="84.9" width="12.0" height="1"/><rect x="662.2" y="86.9" width="14.8" height="1"/><rect x="670.2" y="89.0" width="6.8" height="1"/><rect x="666.0" y="90.9" width="11.0" height="1"/><rect x="665.0" y="93.0" width="12.0" height="1"/></g>
  <!-- justify -->
  <rect x="691.5" y="96.5" width="22" height="1.5" fill="#000" opacity=".12"/>
  <rect x="691.8" y="77" width="20.6" height="19" fill="url(#alg)" stroke="#8a8a88" stroke-width="1"/>
  <g fill="#7a7a78"><rect x="694.2" y="78.9" width="15.7" height="1"/><rect x="694.2" y="80.9" width="15.7" height="1"/><rect x="694.2" y="83.0" width="15.7" height="1"/><rect x="694.2" y="84.9" width="15.7" height="1"/><rect x="694.2" y="86.9" width="15.7" height="1"/><rect x="694.2" y="89.0" width="15.7" height="1"/><rect x="694.2" y="90.9" width="15.7" height="1"/><rect x="694.2" y="93.0" width="15.7" height="1"/></g>
  <rect x="722" y="78" width="1" height="18.5" fill="#333"/>
  <!-- overflow -->
  <rect x="741" y="70" width="10" height="35" fill="url(#ovf2)"/>
  <path d="M742.3 74.3 l2.8 2.3 l-2.8 2.3 M746.3 74.3 l2.8 2.3 l-2.8 2.3" fill="none" stroke="#000" stroke-width="1.5"/>
  <path d="M742.8 97.2 h5.6 l-2.8 3.2z" fill="#000"/>
</svg>
<div class="a" style="left:61px;top:78.7px;font-size:13px;color:#222;line-height:16px">Базовый</div>
<div class="a" style="left:225px;top:78.7px;font-size:13px;color:#222;line-height:16px">Times New Roman</div>
<div class="a" style="left:408px;top:78.7px;font-size:13px;color:#222;line-height:16px">12</div>
</body></html>
